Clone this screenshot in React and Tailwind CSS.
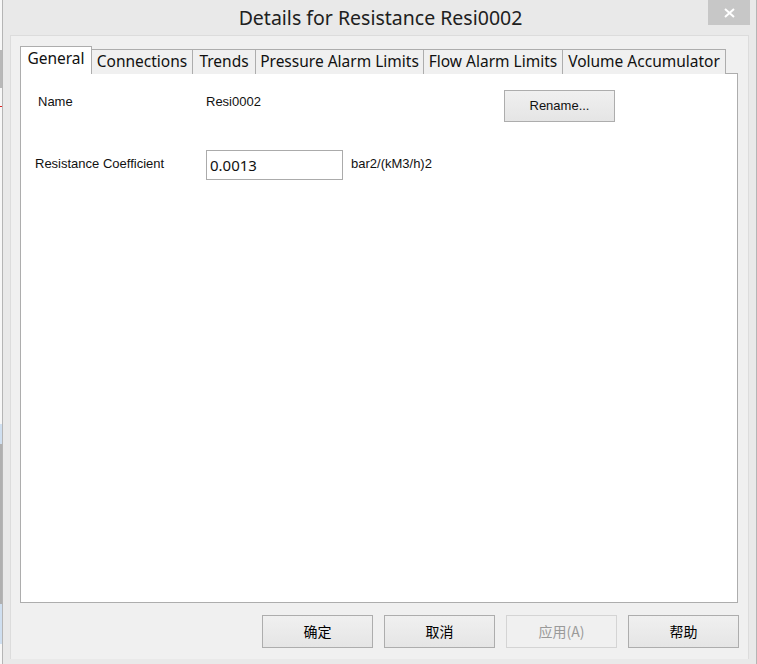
import React, { useState } from "react";

const tabs = [
    { id: "general", label: "General", w: "w-[72px]" },
    { id: "connections", label: "Connections", w: "w-[102px]" },
    { id: "trends", label: "Trends", w: "w-[64px]" },
    { id: "pressure", label: "Pressure Alarm Limits", w: "w-[169px]" },
    { id: "flow", label: "Flow Alarm Limits", w: "w-[140px]" },
    { id: "volume", label: "Volume Accumulator", w: "w-[164px]" },
];

function DialogButton({ children, disabled }) {
    return (
        <button
            type="button"
            disabled={disabled}
            className={`w-[111px] h-[33px] text-[14px] border ${
                disabled
                    ? "border-[#d4d4d4] bg-[#f0f0f0] text-[#9a9a9a]"
                    : "border-[#adadad] bg-gradient-to-b from-[#f0f0f0] to-[#e5e5e5] text-black"
            }`}
            style={{ fontFamily: '"Noto Sans CJK SC", "Noto Sans", sans-serif' }}
        >
            {children}
        </button>
    );
}

export default function App() {
    const [active, setActive] = useState("general");
    const [value, setValue] = useState("0.0013");

    return (
        <div className="w-[757px] h-[664px] flex bg-[#e9e9e9] overflow-hidden">
            {/* bit of the window behind */}
            <div className="w-[2px] h-full flex flex-col bg-[#f7f7f7]">
                <div className="h-[50px]" />
                <div className="h-[38px] bg-[#b8b8b8]" />
                <div className="h-[18px]" />
                <div className="h-[1px] bg-[#e02020]" />
                <div className="flex-1" />
                <div className="h-[20px] bg-[#cfdff0]" />
                <div className="h-[160px] bg-[#b0b0b0]" />
                <div className="h-[40px] bg-[#cfdff0]" />
                <div className="h-[20px]" />
            </div>

            {/* dialog window */}
            <div className="flex-1 h-full flex flex-col border-l border-r border-[#b5b5b5] bg-[#e9e9e9]">
                {/* title bar */}
                <div className="h-[35px] relative flex items-center justify-center">
                    <span
                        className="text-[19.5px] text-[#202020] pl-[2px]"
                        style={{ fontFamily: '"Noto Sans", "Open Sans", sans-serif' }}
                    >
                        Details for Resistance Resi0002
                    </span>
                    <div className="absolute right-[6px] top-0 w-[42px] h-[25px] bg-[#c7c7c7] flex items-center justify-center">
                        <svg width="11" height="10" viewBox="0 0 11 10">
                            <path d="M1 1 L10 9 M10 1 L1 9" stroke="white" strokeWidth="2" />
                        </svg>
                    </div>
                </div>

                {/* client area */}
                <div className="mx-[7px] h-[624px] border-l border-t border-r border-[#dcdcdc] bg-[#f0f0f0] flex flex-col pl-[9px] pt-[10px]">
                    {/* tab strip */}
                    <div
                        className="h-[28px] flex items-end relative z-10"
                        style={{ fontFamily: '"Noto Sans", "Open Sans", sans-serif' }}
                    >
                        {tabs.map((t, i) => {
                            const sel = t.id === active;
                            return (
                                <button
                                    key={t.id}
                                    type="button"
                                    onClick={() => setActive(t.id)}
                                    className={`${t.w} ${i > 0 ? "-ml-px" : ""} border-t border-l border-r border-[#adadad] text-[15.5px] text-[#111] flex items-start justify-center whitespace-nowrap ${
                                        sel
                                            ? "h-[28px] bg-white pt-[1px] relative z-10"
                                            : "h-[25px] bg-[#f0f0f0] pt-[1px]"
                                    }`}
                                >
                                    <span className="leading-[20px]">{t.label}</span>
                                </button>
                            );
                        })}
                    </div>

                    {/* tab panel */}
                    <div
                        className="w-[718px] h-[530px] -mt-px border border-[#adadad] bg-white text-[13px] text-[#111]"
                        style={{ fontFamily: '"Liberation Sans", Arial, sans-serif' }}
                    >
                        <div className="mt-[16px] h-[32px] flex items-start">
                            <div className="w-[185px] pl-[17px] pt-[2px]">Name</div>
                            <div className="w-[298px] pt-[2px]">Resi0002</div>
                            <button
                                type="button"
                                className="w-[111px] h-[32px] border border-[#adadad] bg-gradient-to-b from-[#f0f0f0] to-[#e5e5e5] text-[13px] text-[#111]"
                            >
                                Rename...
                            </button>
                        </div>
                        <div className="mt-[28px] h-[30px] flex items-center">
                            <div className="w-[185px] pl-[14px] pb-[2px]">Resistance Coefficient</div>
                            <input
                                type="text"
                                value={value}
                                onChange={(e) => setValue(e.target.value)}
                                className="w-[137px] h-[30px] border border-[#ababab] px-[3px] text-[15px] text-[#111] outline-none"
                                style={{ fontFamily: '"Noto Sans", "Open Sans", sans-serif' }}
                            />
                            <div className="pl-[8px] pb-[2px]">bar2/(kM3/h)2</div>
                        </div>
                    </div>

                    {/* dialog buttons */}
                    <div className="mt-[12px] w-[719px] flex justify-end gap-[11px]">
                        <DialogButton>确定</DialogButton>
                        <DialogButton>取消</DialogButton>
                        <DialogButton disabled>应用(A)</DialogButton>
                        <DialogButton>帮助</DialogButton>
                    </div>
                </div>
            </div>
        </div>
    );
}
